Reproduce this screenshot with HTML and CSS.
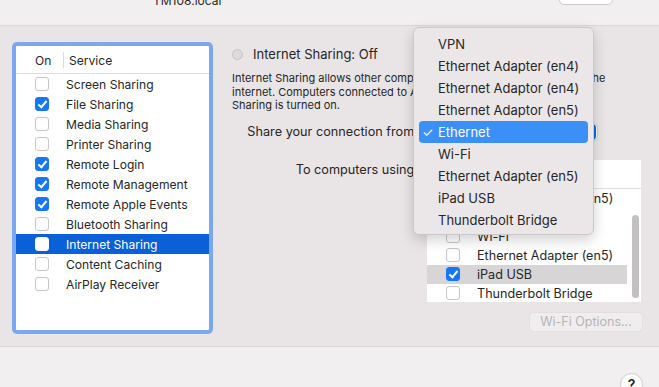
FILE: index.html
```html
<!DOCTYPE html>
<html lang="en">
<head>
    <meta charset="UTF-8">
    <title>Sharing</title>
    <link rel="stylesheet" href="styles.css">
</head>
<body>

    <!-- Top strip: computer name -->
    <div class="top-strip">
        <div class="host-name">TM108.local</div>
        <div class="edit-button">Edit...</div>
    </div>

    <!-- Main pane -->
    <div class="main">
        <div class="service-box">
            <div class="list-head">
                <span class="col-on">On</span>
                <span class="col-sep"></span>
                <span class="col-name">Service</span>
            </div>
            <div class="row"><span class="check"></span>Screen Sharing</div>
            <div class="row"><span class="check on"></span>File Sharing</div>
            <div class="row"><span class="check"></span>Media Sharing</div>
            <div class="row"><span class="check"></span>Printer Sharing</div>
            <div class="row"><span class="check on"></span>Remote Login</div>
            <div class="row"><span class="check on"></span>Remote Management</div>
            <div class="row"><span class="check on"></span>Remote Apple Events</div>
            <div class="row"><span class="check"></span>Bluetooth Sharing</div>
            <div class="row selected"><span class="check"></span>Internet Sharing</div>
            <div class="row"><span class="check"></span>Content Caching</div>
            <div class="row"><span class="check"></span>AirPlay Receiver</div>
        </div>

        <div class="detail">
            <div class="status">
                <span class="radio"></span>
                Internet Sharing: Off
            </div>
            <p class="desc">Internet Sharing allows other computers to share your connection to the internet. Computers connected to AirPort can't use it until Internet Sharing is turned on.</p>

            <div class="form">
                <div class="label">Share your connection from:</div>
                <div class="popup"><span>Ethernet</span><span class="popup-arrow"></span></div>

                <div class="label">To computers using:</div>
                <div class="port-box">
                    <div class="list-head">
                        <span class="col-on">On</span>
                        <span class="col-sep"></span>
                        <span class="col-name">Ports</span>
                    </div>
                    <div class="row"><span class="check"></span>Ethernet Adaptor (en5)</div>
                    <div class="row"><span class="check"></span>Ethernet</div>
                    <div class="row"><span class="check"></span>Wi-Fi</div>
                    <div class="row"><span class="check"></span>Ethernet Adapter (en5)</div>
                    <div class="row grey"><span class="check on"></span>iPad USB</div>
                    <div class="row"><span class="check"></span>Thunderbolt Bridge</div>
                    <div class="scroll-thumb"></div>
                </div>
            </div>

            <div class="options-row">
                <div class="options-button">Wi-Fi Options...</div>
            </div>
        </div>

        <!-- open popup menu -->
        <div class="menu">
            <div class="menu-item">VPN</div>
            <div class="menu-item">Ethernet Adapter (en4)</div>
            <div class="menu-item">Ethernet Adaptor (en4)</div>
            <div class="menu-item">Ethernet Adaptor (en5)</div>
            <div class="menu-item current"><span class="tick">✓</span>Ethernet</div>
            <div class="menu-item">Wi-Fi</div>
            <div class="menu-item">Ethernet Adapter (en5)</div>
            <div class="menu-item">iPad USB</div>
            <div class="menu-item">Thunderbolt Bridge</div>
        </div>
    </div>

    <!-- Bottom strip -->
    <div class="bottom-strip">
        <div class="help">?</div>
    </div>

</body>
</html>
```

FILE: styles.css
```css
body {
    margin: 0;
    width: 659px;
    height: 387px;
    overflow: hidden;
    font-family: Inter, "Liberation Sans", sans-serif;
    font-size: 12.5px;
    color: #262626;
    background: #f2eff0;
}

/* Top strip */
.top-strip {
    height: 25px;
    border-bottom: 1px solid #dad7d8;
    display: flex;
    align-items: flex-start;
    overflow: hidden;
}

.host-name {
    margin-left: 153px;
    margin-top: -7px;
    line-height: 16px;
    font-size: 12px;
}

.edit-button {
    margin-left: auto;
    margin-right: 46px;
    margin-top: -17px;
    width: 52px;
    height: 20px;
    background: white;
    border: 1px solid #cfcccd;
    border-radius: 5px;
    color: transparent;
}

/* Main pane */
.main {
    position: relative;
    height: 321px;
    background: #e9e5e7;
    border-bottom: 1px solid #d9d6d7;
    display: flex;
    padding: 16px 0 0 12px;
    box-sizing: border-box;
}

.service-box {
    width: 193px;
    height: 284px;
    background: white;
    border: 4px solid #7ba7ee;
    border-radius: 5px;
    font-size: 12.1px;
}

.list-head {
    height: 26px;
    border-bottom: 1px solid #dedede;
    display: flex;
    align-items: center;
    padding-top: 1px;
}

.col-on {
    width: 28px;
    padding-left: 19px;
}

.col-sep {
    width: 1px;
    height: 16px;
    background: #dcdcdc;
    margin-right: 5px;
}

.row {
    height: 20px;
    display: flex;
    align-items: center;
    white-space: nowrap;
}

.check {
    width: 12px;
    height: 12px;
    margin: 0 17px 0 19px;
    border: 1px solid #c6c6c6;
    border-radius: 3px;
    background: white;
    position: relative;
}

.check.on {
    background: #1677f4;
    border-color: #1677f4;
}

.check.on::after {
    content: "";
    position: absolute;
    left: 4px;
    top: 1px;
    width: 3px;
    height: 7px;
    border: solid white;
    border-width: 0 2px 2px 0;
    transform: rotate(40deg);
}

.row.selected {
    background: #0a60d6;
    color: white;
}

.row.selected .check {
    border-color: white;
}

.row.grey {
    background: #d7d5d6;
}

/* Right detail pane */
.detail {
    flex: 1;
    padding-left: 19px;
}

.status {
    display: flex;
    align-items: center;
    font-size: 13px;
    height: 20px;
    margin-top: 2px;
}

.radio {
    width: 9px;
    height: 9px;
    border: 1px solid #c4c2c3;
    background: #dddadb;
    border-radius: 50%;
    margin-right: 10px;
}

.desc {
    margin: 8px 0 0;
    width: 380px;
    font-size: 11px;
    line-height: 13.5px;
}

.form {
    display: grid;
    grid-template-columns: 188px auto;
    row-gap: 20px;
    margin-top: 10px;
}

.label {
    text-align: right;
    font-size: 12.7px;
    line-height: 17px;
    white-space: nowrap;
    padding-right: 2px;
}

.popup {
    width: 177px;
    height: 18px;
    background: white;
    border-radius: 5px;
    box-shadow: 0 0 0 1px rgba(0, 0, 0, 0.1);
    display: flex;
    align-items: center;
    padding-left: 18px;
    box-sizing: border-box;
}

.popup span:first-child {
    flex: 1;
}

.popup-arrow {
    width: 16px;
    height: 16px;
    margin-right: 1px;
    background: #0a6be0;
    border-radius: 4px;
}

.port-box {
    position: relative;
    margin-left: 7px;
    width: 214px;
    height: 142px;
    background: white;
    margin-top: -1px;
    font-size: 12.6px;
}

.port-box .list-head {
    height: 27px;
}

.port-box .row {
    width: 200px;
    height: 19px;
}

.scroll-thumb {
    position: absolute;
    left: 205px;
    top: 55px;
    width: 7px;
    height: 83px;
    background: #c2c0c1;
    border-radius: 4px;
}

.options-row {
    display: flex;
    justify-content: flex-end;
    width: 411px;
    margin-top: 10px;
}

.options-button {
    width: 112px;
    height: 18px;
    line-height: 18px;
    text-align: center;
    font-size: 12.5px;
    color: #b7b4b5;
    background: #efedee;
    border: 1px solid #e2dfe0;
    border-radius: 5px;
}

/* Popup menu over the form */
.menu {
    position: absolute;
    left: 413px;
    top: 1px;
    width: 181px;
    height: 208px;
    box-sizing: border-box;
    padding: 5px 5px 0;
    background: #ebe7e9;
    border: 1px solid #cbc8c9;
    border-radius: 6px;
    box-shadow: 0 5px 14px rgba(0, 0, 0, 0.18);
}

.menu-item {
    height: 22px;
    line-height: 22px;
    padding-left: 19px;
    font-size: 13px;
    border-radius: 4px;
    position: relative;
    white-space: nowrap;
}

.menu-item.current {
    background: #3a90f6;
    color: white;
}

.tick {
    position: absolute;
    left: 3px;
}

/* Bottom strip */
.bottom-strip {
    height: 39px;
    position: relative;
}

.help {
    position: absolute;
    left: 620px;
    top: 26px;
    width: 21px;
    height: 21px;
    border: 1px solid #cfcccd;
    border-radius: 50%;
    background: white;
    text-align: center;
    font-size: 14px;
    line-height: 21px;
    font-weight: 600;
}
```
